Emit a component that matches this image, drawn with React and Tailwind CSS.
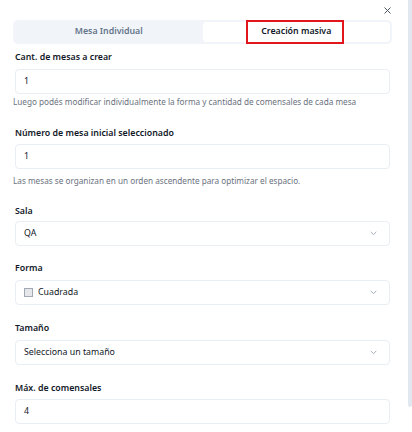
import React from "react";

const font = { fontFamily: '"Noto Sans", "Open Sans", sans-serif' };

function Chevron() {
  return (
    <svg width="7" height="5" viewBox="0 0 7 5" fill="none" className="text-[#9aa3b0]">
      <path d="M1 1.2l2.5 2.4L6 1.2" stroke="currentColor" strokeWidth="0.9" strokeLinecap="round" strokeLinejoin="round" />
    </svg>
  );
}

function Label({ children, className = "" }) {
  return (
    <div className={"text-[8.8px] leading-[12px] font-semibold text-[#111827] pl-[2px] " + className}>{children}</div>
  );
}

function Box({ children, select, className = "" }) {
  return (
    <div className={"ml-[2px] w-[375px] h-[25px] rounded-[4px] border border-[#e9eef4] bg-white flex items-center pl-[8px] pr-[12px] text-[8.8px] text-[#111827] " + className}>
      <div className="flex-1 flex items-center gap-[5px]">{children}</div>
      {select && <Chevron />}
    </div>
  );
}

function Helper({ children, className = "" }) {
  return <div className={"text-[8.2px] leading-[12px] text-[#6b7280] whitespace-nowrap " + className}>{children}</div>;
}

export default function App() {
  return (
    <div className="w-[412px] h-[432px] bg-white flex overflow-hidden" style={font}>
      <div className="flex-1 pl-[13px] pr-[16px]">
        <div className="h-[20px] flex justify-end pt-[7px] pr-[1px]">
          <svg width="7" height="7" viewBox="0 0 7 7" className="text-[#4b5563]">
            <path d="M0.8 0.8l5.4 5.4M6.2 0.8l-5.4 5.4" stroke="currentColor" strokeWidth="1" strokeLinecap="round" />
          </svg>
        </div>
        <div className="h-[24px] rounded-[5px] bg-[#f1f5f9] p-[2px] grid grid-cols-2">
          <div className="flex items-center justify-center text-[8.8px] font-semibold text-[#64748b]">Mesa Individual</div>
          <div className="relative flex items-center justify-center rounded-[4px] bg-white text-[8.8px] font-semibold text-[#111827]">
            Creación masiva
            <div className="absolute left-[43px] top-[-2px] w-[98px] h-[24px] border-2 border-[#e0161b]"></div>
          </div>
        </div>
        <Label className="mt-[7px]">Cant. de mesas a crear</Label>
        <Box className="mt-[6px]">1</Box>
        <Helper className="mt-[2px]">Luego podés modificar individualmente la forma y cantidad de comensales de cada mesa</Helper>
        <Label className="mt-[19px]">Número de mesa inicial seleccionado</Label>
        <Box className="mt-[5px]">1</Box>
        <Helper className="mt-[6px]">Las mesas se organizan en un orden ascendente para optimizar el espacio.</Helper>
        <Label className="mt-[18px]">Sala</Label>
        <Box select className="mt-[4px]">QA</Box>
        <Label className="mt-[16px]">Forma</Label>
        <Box select className="mt-[6px]">
          <span className="w-[9px] h-[9px] border border-[#a3a9b3] bg-[#e5e7eb] inline-block" />
          <span>Cuadrada</span>
        </Box>
        <Label className="mt-[17px]">Tamaño</Label>
        <Box select className="mt-[6px]">Selecciona un tamaño</Box>
        <Label className="mt-[17px]">Máx. de comensales</Label>
        <Box className="mt-[5px]">4</Box>
      </div>
      <div className="w-[4px] h-[407px] bg-[#e2e8f0] rounded-b-[2px] shrink-0" />
    </div>
  );
}
